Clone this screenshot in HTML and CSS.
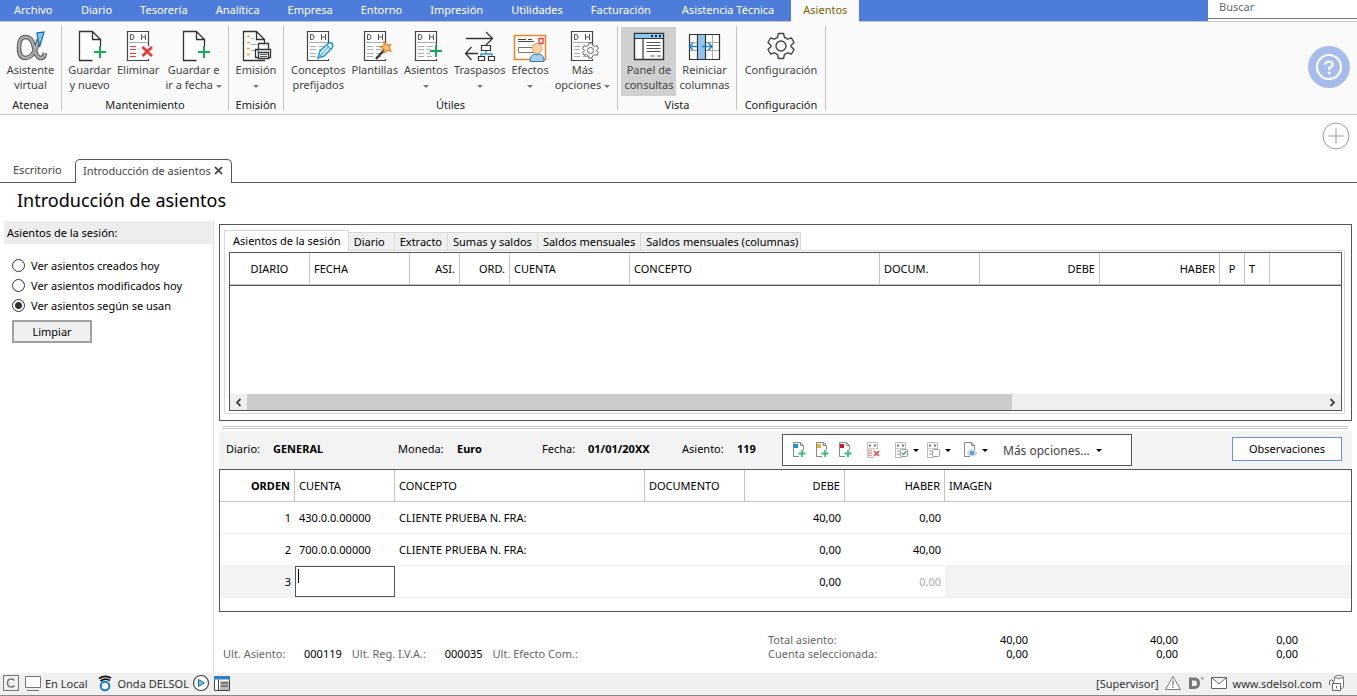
FILE: index.html
```html
<!DOCTYPE html>
<html lang="es">
<head>
<meta charset="utf-8">
<title>Introducción de asientos</title>
<link rel="stylesheet" href="styles.css">
</head>
<body>
<svg class="sprite" aria-hidden="true">
  <symbol id="page-plus" viewBox="0 0 34 34">
    <path d="M19.500 31.500H6.500V2.500H19.500L27.500 10.500V17M19.500 2.500V10.500H27.500" fill="#fff" stroke="#333" stroke-width="1.300"/>
    <path d="M27 17v12M21 23h12" stroke="#18a754" stroke-width="2"/>
  </symbol>
  <symbol id="sheet" viewBox="0 0 34 34">
    <path d="M27.500 18V2.500H6.500V31.500H27.500V30" fill="#fff" stroke="#444" stroke-width="1.200"/>
    <path d="M9.500 5.500v5h1.500q2 0 2-2.500t-2-2.500zM20.500 5v6M24.500 5v6M20.500 8h4" fill="none" stroke="#555"/>
    <path d="M8 13.500h19" stroke="#aaa"/>
  </symbol>
  <symbol id="sheet-lines" viewBox="0 0 34 34">
    <use href="#sheet"/>
    <path d="M9 17.500h6M9 20.500h6M9 24.500h6M9 27.500h6M18 17.500h6M18 20.500h6M18 24.500h5M18 27.500h5" stroke="#aaa"/>
  </symbol>
  <symbol id="gear" viewBox="0 0 28 28">
    <path d="M10.500 5.500 11.500 1.500H16.500L17.500 5.500Q19 6 20.500 7.200L24.500 6 27 10.500 24 13.500V14.500L27 17.500 24.500 22 20.500 20.800Q19 22 17.500 22.500L16.500 26.500H11.500L10.500 22.500Q9 22 7.500 20.800L3.500 22 1 17.500 4 14.500V13.500L1 10.500 3.500 6 7.500 7.200Q9 6 10.500 5.500Z" fill="#fafafa" stroke="#444" stroke-width="1.400" stroke-linejoin="round"/>
    <circle cx="14" cy="14" r="5" fill="none" stroke="#444" stroke-width="1.400"/>
  </symbol>
  <symbol id="mini-page" viewBox="0 0 18 18">
    <path d="M9 15.500H3.500V1.500H10.500L13.500 4.500V9M10.500 1.500V4.500H13.500" fill="#fff" stroke="#888"/>
  </symbol>
  <symbol id="mini-plus" viewBox="0 0 18 18">
    <path d="M12 9v7M8.500 12.500h7" stroke="#3cbd73" stroke-width="1.800"/>
  </symbol>
  <symbol id="mini-sheet" viewBox="0 0 18 18">
    <path d="M13.500 8V1.500H3.500V16.500H10" fill="#fff" stroke="#bbb"/>
    <path d="M5 3.500h2v2h-2zM10 3.500h2v2h-2z" fill="#777"/>
    <path d="M4 7.500h9" stroke="#ccc"/>
  </symbol>
  <symbol id="console" viewBox="0 0 34 34">
    <path d="M2.500 4.500H31.500V30.500H2.500Z" fill="#fff" stroke="#333" stroke-width="1.400"/>
    <path d="M3 5h28v4H3z" fill="#8ec6ef"/>
    <path d="M2.500 9.500h29M11 10v21" stroke="#333" stroke-width="1.200"/>
    <path d="M19 7h2M23 7h2M27 7h2" stroke="#222" stroke-width="2"/>
    <path d="M14.500 13.500h14M14.500 16.500h14M14.500 19.500h14M14.500 22.500h14M18.500 27h4M25 27h4" stroke="#555" stroke-width="1.200"/>
  </symbol>
</svg>

<header class="menubar">
  <nav class="menu" aria-label="Menú principal">
    <a class="menu-file" href="#">Archivo</a>
    <a href="#">Diario</a>
    <a href="#">Tesorería</a>
    <a href="#">Analítica</a>
    <a href="#">Empresa</a>
    <a href="#">Entorno</a>
    <a href="#">Impresión</a>
    <a href="#">Utilidades</a>
    <a href="#">Facturación</a>
    <a class="menu-support" href="#">Asistencia Técnica</a>
    <a class="menu-active" href="#">Asientos</a>
  </nav>
  <input class="search" type="text" placeholder="Buscar" aria-label="Buscar">
</header>

<div class="ribbon">
  <section class="group group-atenea">
    <div class="group-buttons">
      <button class="tool">
        <svg class="icon" viewBox="0 0 34 34">
          <path d="M31 24Q30 29.500 26 29Q22 28 20 18Q18 8 11.500 8Q5 8 5 18.500Q5 29 11.500 29Q18 29 22 19L25 10" fill="none" stroke="#555" stroke-width="4.600"/>
          <path d="M31 24Q30 29.500 26 29Q22 28 20 18Q18 8 11.500 8Q5 8 5 18.500Q5 29 11.500 29Q18 29 22 19L25 10" fill="none" stroke="#aaa" stroke-width="2.600"/>
          <path d="M23 4 30 3 25.500 18Z" fill="#8ec6ef" stroke="#1874ad" stroke-width="1.300"/>
        </svg>
        <span>Asistente<br>virtual</span>
      </button>
    </div>
    <h2>Atenea</h2>
  </section>
  <section class="group group-mantenimiento">
    <div class="group-buttons">
      <button class="tool"><svg class="icon"><use href="#page-plus"/></svg><span>Guardar<br>y nuevo</span></button>
      <button class="tool">
        <svg class="icon" viewBox="0 0 34 34">
          <use href="#sheet"/>
          <path d="M9 17.500h6M9 20.500h6M9 24.500h6M9 27.500h6" stroke="#ee3b3b" stroke-width="1.200"/>
          <path d="M20.500 17h11v11h-11z" fill="#fafafa"/>
          <path d="M21.500 18 31 27M31 18 21.500 27" stroke="#ea3535" stroke-width="2.600"/>
        </svg>
        <span>Eliminar</span>
      </button>
      <button class="tool"><svg class="icon"><use href="#page-plus"/></svg><span>Guardar e<br>ir a fecha <i class="caret"></i></span></button>
    </div>
    <h2>Mantenimiento</h2>
  </section>
  <section class="group group-emision">
    <div class="group-buttons">
      <button class="tool">
        <svg class="icon" viewBox="0 0 34 34">
          <path d="M26 31.500H4.500V2.500H17.500L25.500 10.500V14M17.500 2.500V10.500H25.500" fill="#fff" stroke="#333" stroke-width="1.300"/>
          <path d="M8 7.500h3M8 13.500h3M8 19.500h3M8 25.500h3" stroke="#f2a01c" stroke-width="1.600"/>
          <path d="M12 9.500h3M12 15.500h6M12 21.500h4" stroke="#aaa"/>
          <path d="M19.500 20V14.500H29.500V20M19.500 28.500H16.500V20.500H31.500V28.500H29" fill="#fff" stroke="#333" stroke-width="1.300"/>
          <path d="M19.500 23.500H29.500V29.500H19.500Z" fill="#fff" stroke="#333" stroke-width="1.300"/>
          <path d="M21 25.500h7M21 27.500h7" stroke="#555"/>
          <path d="M18 22h2" stroke="#2c8fd0" stroke-width="1.500"/>
        </svg>
        <span>Emisión<br><i class="caret"></i></span>
      </button>
    </div>
    <h2>Emisión</h2>
  </section>
  <section class="group group-utiles">
    <div class="group-buttons">
      <button class="tool">
        <svg class="icon" viewBox="0 0 34 34">
          <use href="#sheet-lines"/>
          <path d="M17 29 19 22 27 14.500Q30 13 31.500 15Q32.500 17 31 19L23 27Z" fill="#dff2fc" stroke="#2496cf" stroke-width="1.500"/>
          <path d="M19 27 28 17M26 16 29 20" stroke="#2496cf"/>
        </svg>
        <span>Conceptos<br>prefijados</span>
      </button>
      <button class="tool">
        <svg class="icon" viewBox="0 0 34 34">
          <use href="#sheet-lines"/>
          <path d="M18 30 27 20" stroke="#333" stroke-width="2.200"/>
          <path d="M26 13 28.500 16 32.500 15.500 31 19 33 22 29 21.500 26 24 26 20 22.500 18 26 17Z" fill="#ffc47c" stroke="#ef7d22" stroke-width="1.200"/>
        </svg>
        <span>Plantillas</span>
      </button>
      <button class="tool">
        <svg class="icon" viewBox="0 0 34 34">
          <use href="#sheet-lines"/>
          <path d="M21 20h8v6h-8z" fill="#fafafa"/>
          <path d="M27 16v12M21 22h12" stroke="#18a754" stroke-width="2"/>
        </svg>
        <span>Asientos<br><i class="caret"></i></span>
      </button>
      <button class="tool">
        <svg class="icon" viewBox="0 0 34 34">
          <path d="M3 9.500H29M23 3 29.500 9.500 23 16M15 24.500H3M8.500 18 2.500 24.500 8.500 31" fill="none" stroke="#333" stroke-width="1.300"/>
          <path d="M23 22v3M18 28V25H29V28" fill="none" stroke="#2c95d6" stroke-width="1.300"/>
          <path d="M18.500 16.500h9v5h-9zM15.500 27.500h6v4h-6zM25.500 27.500h6v4h-6z" fill="#fff" stroke="#333" stroke-width="1.200"/>
        </svg>
        <span>Traspasos<br><i class="caret"></i></span>
      </button>
      <button class="tool">
        <svg class="icon" viewBox="0 0 34 34">
          <path d="M1.500 6.500H32.500V30.500H1.500Z" fill="#fff" stroke="#e98327" stroke-width="1.500"/>
          <path d="M5 10.500h8M5 12.500h16M15 10.500h4" stroke="#444"/>
          <path d="M26 9.500h4v5h-4z" fill="none" stroke="#e33" stroke-width="1.300"/>
          <path d="M5.500 18.500h16v5h-16z" fill="none" stroke="#777"/>
          <circle cx="24" cy="19.500" r="5" fill="#fbd0a4" stroke="#e59a5c"/>
          <path d="M17 32.500Q17 26 21.500 25Q24 27 26.500 25Q31 26 31 32.500Z" fill="#a7cfee" stroke="#2c79b6"/>
        </svg>
        <span>Efectos<br><i class="caret"></i></span>
      </button>
      <button class="tool tool-more">
        <svg class="icon" viewBox="0 0 34 34">
          <use href="#sheet-lines"/>
          <use href="#gear" x="17" y="13" width="17" height="17"/>
        </svg>
        <span>Más<br>opciones <i class="caret"></i></span>
      </button>
    </div>
    <h2>Útiles</h2>
  </section>
  <section class="group group-vista">
    <div class="group-buttons">
      <button class="tool tool-on" aria-pressed="true"><svg class="icon"><use href="#console"/></svg><span>Panel de<br>consultas</span></button>
      <button class="tool">
        <svg class="icon" viewBox="0 0 34 34">
          <path d="M1.500 5.500h30v25h-30z" fill="#fff"/>
          <path d="M1 13.500h30M1 21.500h30M24.500 5v25" stroke="#aaa"/>
          <path d="M1.500 5.500h30v25h-30z" fill="none" stroke="#333" stroke-width="1.200"/>
          <path d="M9.500 5.500h8v25h-8z" fill="#8ec6ef" stroke="#333" stroke-width="1.200"/>
          <path d="M9 17.500H2M5 14 1.500 17.500 5 21M14 17.500H24M20 13.500 24 17.500 20 21.500" fill="none" stroke="#1d86c7" stroke-width="1.500"/>
        </svg>
        <span>Reiniciar<br>columnas</span>
      </button>
    </div>
    <h2>Vista</h2>
  </section>
  <section class="group group-config">
    <div class="group-buttons">
      <button class="tool"><svg class="icon" viewBox="0 0 34 34"><use href="#gear" x="3" y="3" width="28" height="28"/></svg><span>Configuración</span></button>
    </div>
    <h2>Configuración</h2>
  </section>
  <button class="help" aria-label="Ayuda">
    <svg viewBox="0 0 42 42">
      <circle cx="21" cy="21" r="21" fill="#a6bdec"/>
      <circle cx="21" cy="21" r="12" fill="none" stroke="#fff" stroke-width="2.200"/>
      <path d="M17.500 18.500Q17.500 15.500 21 15.500T24.700 18.500Q24.700 20.500 21.500 21.500V24" fill="none" stroke="#fff" stroke-width="2.200"/>
      <circle cx="21.300" cy="27" r="1.400" fill="#fff"/>
    </svg>
  </button>
</div>

<div class="quick">
  <button class="add" aria-label="Añadir">
    <svg viewBox="0 0 28 28"><circle cx="14" cy="14" r="13" fill="#fff" stroke="#999"/><path d="M14 6.500v15M6.500 14h15" stroke="#999"/></svg>
  </button>
</div>

<nav class="doc-tabs" aria-label="Ventanas abiertas">
  <a href="#">Escritorio</a>
  <div class="doc-active">
    <a href="#">Introducción de asientos</a>
    <button aria-label="Cerrar"><svg viewBox="0 0 9 9"><path d="M1 1 8 8M8 1 1 8" stroke="#333" stroke-width="1.600"/></svg></button>
  </div>
  <span class="doc-rest"></span>
</nav>

<h1>Introducción de asientos</h1>

<div class="workspace">
  <aside class="sidebar">
    <h3>Asientos de la sesión:</h3>
    <label><input type="radio" name="ver">Ver asientos creados hoy</label>
    <label><input type="radio" name="ver">Ver asientos modificados hoy</label>
    <label><input type="radio" name="ver" checked>Ver asientos según se usan</label>
    <button class="clear">Limpiar</button>
  </aside>

  <main class="content">
    <section class="query">
      <div class="query-tabs">
        <button class="query-tab query-tab-on">Asientos de la sesión</button>
        <button class="query-tab query-tab-wide">Diario</button>
        <button class="query-tab">Extracto</button>
        <button class="query-tab">Sumas y saldos</button>
        <button class="query-tab">Saldos mensuales</button>
        <button class="query-tab">Saldos mensuales (columnas)</button>
      </div>
      <div class="query-page">
        <div class="query-grid">
          <table class="grid grid-session">
            <colgroup><col class="w80"><col class="w100"><col class="w50"><col class="w50"><col class="w120"><col class="w250"><col class="w100"><col class="w120"><col class="w120"><col class="w25"><col class="w25"><col></colgroup>
            <thead>
              <tr><th class="mid">DIARIO</th><th>FECHA</th><th class="num">ASI.</th><th class="num">ORD.</th><th>CUENTA</th><th>CONCEPTO</th><th>DOCUM.</th><th class="num">DEBE</th><th class="num">HABER</th><th class="mid">P</th><th>T</th><th></th></tr>
            </thead>
          </table>
          <div class="scroll">
            <button aria-label="Desplazar a la izquierda"><svg viewBox="0 0 9 9"><path d="M6.500 1 3 4.500 6.500 8" fill="none" stroke="#444" stroke-width="1.800"/></svg></button>
            <div class="scroll-track"><div class="scroll-thumb"></div></div>
            <button aria-label="Desplazar a la derecha"><svg viewBox="0 0 9 9"><path d="M2.500 1 6 4.500 2.500 8" fill="none" stroke="#444" stroke-width="1.800"/></svg></button>
          </div>
        </div>
      </div>
    </section>

    <div class="splitter"></div>

    <div class="entry-bar">
      <div class="entry-data">
        <span>Diario:</span><b>GENERAL</b>
        <span>Moneda:</span><b>Euro</b>
        <span>Fecha:</span><b>01/01/20XX</b>
        <span>Asiento:</span><b>119</b>
      </div>
      <div class="entry-tools">
        <button aria-label="Añadir línea"><svg class="mini" viewBox="0 0 18 18"><use href="#mini-page"/><path d="M4 3h4v4H4z" fill="#0d94dd"/><use href="#mini-plus"/></svg></button>
        <button aria-label="Insertar línea"><svg class="mini" viewBox="0 0 18 18"><use href="#mini-page"/><path d="M4 3h4v4H4z" fill="#f2ac2b"/><use href="#mini-plus"/></svg></button>
        <button aria-label="Duplicar línea"><svg class="mini" viewBox="0 0 18 18"><use href="#mini-page"/><path d="M4 3h4v4H4z" fill="#db1030"/><use href="#mini-plus"/></svg></button>
        <button class="spaced" aria-label="Eliminar línea"><svg class="mini" viewBox="0 0 18 18"><use href="#mini-sheet"/><path d="M4 9.500h4M4 12h4M4 14.500h4" stroke="#f39a9a" stroke-width="1.500"/><path d="M9 8h7v8H9z" fill="#fff"/><path d="M10 10 15 15M15 10 10 15" stroke="#ec4a4a" stroke-width="1.700"/></svg></button>
        <button class="spaced" aria-label="Validar"><svg class="mini" viewBox="0 0 18 18"><use href="#mini-sheet"/><path d="M5 10h3M5 13h3" stroke="#bbb" stroke-width="1.500"/><rect x="8.500" y="8.500" width="7" height="7" rx="1" fill="#fff" stroke="#999"/><path d="M10 12 11.500 13.500 14.500 10" fill="none" stroke="#2fb562" stroke-width="1.300"/></svg><i class="caret caret-dark"></i></button>
        <button aria-label="Desmarcar"><svg class="mini" viewBox="0 0 18 18"><use href="#mini-sheet"/><path d="M5 10h3M5 13h3" stroke="#bbb" stroke-width="1.500"/><rect x="8.500" y="8.500" width="7" height="7" rx="1" fill="#fff" stroke="#999"/></svg><i class="caret caret-dark"></i></button>
        <button class="spaced" aria-label="Ver documento"><svg class="mini" viewBox="0 0 18 18"><use href="#mini-page"/><ellipse cx="11" cy="12" rx="5" ry="3.500" fill="#c6d7e4"/><circle cx="11" cy="12" r="2.300" fill="#5e9dcc"/></svg><i class="caret caret-dark"></i></button>
        <button class="more">Más opciones...<i class="caret caret-dark"></i></button>
      </div>
      <button class="notes">Observaciones</button>
    </div>

    <div class="entry-panel">
      <table class="grid grid-entry">
        <colgroup><col class="w75"><col class="w100"><col class="w250"><col class="w100"><col class="w100"><col class="w100"><col></colgroup>
        <thead>
          <tr><th class="num strong">ORDEN</th><th>CUENTA</th><th>CONCEPTO</th><th>DOCUMENTO</th><th class="num">DEBE</th><th class="num">HABER</th><th>IMAGEN</th></tr>
        </thead>
        <tbody>
          <tr><td class="num">1</td><td>430.0.0.00000</td><td>CLIENTE PRUEBA N. FRA:</td><td></td><td class="num">40,00</td><td class="num">0,00</td><td></td></tr>
          <tr><td class="num">2</td><td>700.0.0.00000</td><td>CLIENTE PRUEBA N. FRA:</td><td></td><td class="num">0,00</td><td class="num">40,00</td><td></td></tr>
          <tr><td class="num shade">3</td><td class="edit"><input type="text" aria-label="Cuenta"></td><td></td><td></td><td class="num">0,00</td><td class="num faint">0,00</td><td class="shade"></td></tr>
        </tbody>
      </table>
    </div>

    <div class="totals">
      <div class="last">
        <span class="last-entry">Ult. Asiento:</span><output>000119</output>
        <span>Ult. Reg. I.V.A.:</span><output>000035</output>
        <span>Ult. Efecto Com.:</span>
      </div>
      <div class="sums">
        <span>Total asiento:</span><output>40,00</output><output>40,00</output><output>0,00</output>
        <span>Cuenta seleccionada:</span><output>0,00</output><output>0,00</output><output>0,00</output>
      </div>
    </div>
  </main>
</div>

<footer class="status">
  <div class="status-side">
    <svg class="status-icon" viewBox="0 0 18 18"><rect x="1.500" y="1.500" width="15" height="15" fill="none" stroke="#777"/><path d="M12.500 6.500Q11.500 5 9.300 5Q5.500 5 5.500 9T9.300 13Q11.500 13 12.500 11.500" fill="none" stroke="#777" stroke-width="1.500"/></svg>
    <svg class="status-icon status-screen" viewBox="0 0 18 18"><path d="M1.500 2.500h15v11h-15z" fill="#fff" stroke="#777"/><path d="M3 16.500h12" stroke="#777"/></svg>
    <span class="local">En Local</span>
    <svg class="status-icon" viewBox="0 0 18 18"><circle cx="9" cy="12" r="4.300" fill="#fff" stroke="#0c7bd0" stroke-width="2"/><path d="M3 4.500Q9 .500 15 4M4.500 7Q9 3.500 14 6.500" fill="none" stroke="#111" stroke-width="1.800"/></svg>
    <span>Onda DELSOL</span>
    <svg class="status-icon" viewBox="0 0 18 18"><circle cx="9" cy="9" r="7.500" fill="#fff" stroke="#444" stroke-width="1.200"/><path d="M6.500 5.500 12.500 9 6.500 12.500Z" fill="#7db9e8" stroke="#1b6fae"/></svg>
    <svg class="status-icon" viewBox="0 0 18 18"><path d="M1.500 2.500h15v14h-15z" fill="#fff" stroke="#444"/><path d="M1 2h16v3.500H1z" fill="#2f80c3"/><path d="M5.500 5.500v11" stroke="#444"/><path d="M7 7h9v9H7z" fill="#bbb"/><path d="M8 9h7M8 12h7" stroke="#666" stroke-width="1.500"/></svg>
  </div>
  <div class="status-side status-end">
    <span>[Supervisor]</span>
    <svg class="status-icon" viewBox="0 0 18 18"><path d="M9 2.500 16.500 15.500H1.500Z" fill="#fff" stroke="#777"/><path d="M9 6.500v5M9 12.500v1.500" stroke="#777" stroke-width="1.300"/></svg>
    <svg class="status-icon" viewBox="0 0 18 18"><path d="M3.500 5H7.500Q11.500 5 11.500 9.300T7.500 13.500H3.500Z" fill="none" stroke="#777" stroke-width="3"/><path d="M14 3h2.500v2.500H14z" fill="#aaa"/></svg>
    <svg class="status-icon" viewBox="0 0 18 18"><path d="M1.500 3.500h15v11h-15zM1.500 3.500 9 10 16.500 3.500" fill="#fff" stroke="#666"/></svg>
    <a href="#">www.sdelsol.com</a>
    <svg class="status-icon" viewBox="0 0 18 18"><path d="M7.500 7V3Q7.500 1.500 12 1.500T16.500 3V13Q16 14.500 14 14.500M7.500 3.500Q12 5.500 16.500 3.500" fill="#fff" stroke="#777"/><path d="M5.500 9.500h8v7h-8z" fill="#fff" stroke="#666"/><path d="M2.500 11V8Q2.500 6 4.500 6T6.500 8V9.500M9.500 12v2.500" fill="none" stroke="#666"/></svg>
  </div>
</footer>
</body>
</html>
```

FILE: styles.css
```css
* { box-sizing: border-box; }

body {
  margin: 0;
  min-height: 100vh;
  display: flex;
  flex-direction: column;
  background: #fff;
  color: #000;
  font: 11px/15px "Noto Sans", "Open Sans", sans-serif;
}

button, input { font: inherit; color: inherit; }
button { padding: 0; border: 0; background: none; }
a { color: inherit; text-decoration: none; }
h1, h2, h3 { margin: 0; font-weight: 400; }
svg { display: block; }
.sprite { display: none; }

/* Menu */
.menubar { display: flex; height: 22px; background: #4d7cdb; border-bottom: 1px solid #c4c4c4; }
.menu { display: flex; flex: 1; color: #fff; }
.menu a { padding: 2px 14px 0; white-space: nowrap; }
.menu .menu-file { width: 67px; }
.menu .menu-support { padding: 2px 17px 0; }
.menu .menu-active { height: 22px; padding: 2px 12px 0; background: #fafafa; color: #7f6000; }
.search { width: 149px; height: 19px; padding: 0 11px 5px; border: 0; border-bottom: 1px solid #777; box-shadow: 0 2px #fff; outline: 0; }
.search::placeholder { color: #666; opacity: 1; }

/* Ribbon */
.ribbon { display: flex; height: 93px; padding: 4px 0; background: #fafafa; border-bottom: 1px solid #c4c4c4; color: #444; }
.group { display: flex; flex-direction: column; justify-content: space-between; border-right: 1px solid #c4c4c4; padding-top: 1px; }
.group h2 { font-size: 11px; line-height: 11px; text-align: center; color: #222; }
.group-atenea { width: 62px; }
.group-mantenimiento { width: 167px; }
.group-emision { width: 55px; }
.group-utiles { width: 334px; }
.group-vista { width: 119px; }
.group-config { width: 89px; }
.group-buttons { display: flex; justify-content: center; }
.tool { display: flex; flex-direction: column; align-items: center; height: 69px; padding: 2px 3px 0; white-space: nowrap; }
.tool-on { background: #d0d0d0; }
.icon { width: 34px; height: 34px; margin-bottom: -1px; flex: none; }
.caret { display: inline-block; vertical-align: middle; border: 3px solid transparent; border-top-color: #777; border-bottom: 0; }
.caret-dark { border-top-color: #000; }
.help { width: 42px; height: 42px; margin: 20px 7px 0 auto; }

/* Open windows */
.quick { display: flex; justify-content: flex-end; height: 44px; padding: 7px 7px 0; }
.add { width: 28px; height: 28px; }
.doc-tabs { display: flex; height: 24px; color: #444; }
.doc-tabs > a { width: 75px; padding: 3px 13px 0; border-bottom: 1px solid #555; }
.doc-active { display: flex; align-items: center; gap: 3px; padding: 0 8px 3px 7px; border: 1px solid #555; border-bottom: 0; border-radius: 5px 5px 0 0; white-space: nowrap; }
.doc-active svg { width: 9px; height: 9px; }
.doc-rest { flex: 1; border-bottom: 1px solid #555; }
h1 { height: 38px; padding: 4px 17px 0; font-size: 18px; line-height: 26px; }

/* Sidebar */
.workspace { display: flex; flex: 1; }
.sidebar { display: flex; flex-direction: column; align-items: flex-start; width: 214px; padding: 0 1px 0 4px; border-right: 1px solid #d8d8d8; }
.sidebar h3 { align-self: stretch; height: 23px; margin-bottom: 11px; padding: 4px 3px; background: #ededed; font-size: 11px; line-height: 15px; }
.sidebar label { display: flex; align-items: center; gap: 6px; height: 20px; margin-left: 8px; }
.sidebar input { appearance: none; width: 13px; height: 13px; margin: 0; border: 1px solid #333; border-radius: 50%; background: #fff; }
.sidebar input:checked { background: radial-gradient(circle, #333 3px, #fff 4px); }
.clear { width: 80px; height: 23px; margin: 5px 8px; border: 2px solid #a0a0a0; background: #efefef; }

/* Query panel */
.content { display: flex; flex: 1; flex-direction: column; min-width: 0; padding: 3px 5px 0; }
.query { display: flex; flex: 1; flex-direction: column; padding: 5px 6px 6px 4px; border: 1px solid #555; }
.query-tabs { display: flex; align-items: flex-end; height: 20px; }
.query-tab { height: 18px; padding: 0 5px; border: 1px solid #d9d9d9; border-width: 1px 1px 0 0; background: #efefef; white-space: nowrap; }
.query-tab-wide { padding-right: 9px; }
.query-tab:last-child { padding-right: 2px; }
.query-tab-on { position: relative; height: 21px; margin-bottom: -1px; padding: 0 7px 2px 8px; border-left-width: 1px; background: #fff; }
.query-page { display: flex; flex: 1; padding: 1px 2px 2px 4px; border: 1px solid #d9d9d9; }
.query-grid { display: flex; flex: 1; flex-direction: column; justify-content: space-between; border: 1px solid #555; }
.scroll { display: flex; height: 16px; background: #efefef; }
.scroll button { display: grid; place-items: center; width: 17px; }
.scroll svg { width: 9px; height: 9px; }
.scroll-track { flex: 1; }
.scroll-thumb { width: 71%; height: 100%; background: #ccc; }

/* Tables */
.grid { width: 100%; table-layout: fixed; border-collapse: separate; border-spacing: 0; }
.grid th, .grid td { height: 32px; padding: 0 4px; text-align: left; font-weight: 400; white-space: nowrap; }
.grid th { border-right: 1px solid #c4c4c4; border-bottom: 1px solid #c4c4c4; }
.grid td { border-bottom: 1px solid #eee; }
.grid th:last-child { border-right: 0; }
.grid-session { border-bottom: 1px solid #555; }
.grid .num { text-align: right; }
.grid .mid { text-align: center; }
.grid .strong { font-weight: 700; }
.grid .shade { background: #f3f3f3; }
.grid .faint { color: #aaa; }
.grid .edit { padding: 0; }
.edit input { display: block; width: 100%; height: 31px; padding: 1px 2px 12px; border: 1px solid #555; outline: 0; background: linear-gradient(#000, #000) 2px 2px / 1px 14px no-repeat #fff; }
.w25 { width: 25px; }
.w50 { width: 50px; }
.w75 { width: 75px; }
.w80 { width: 80px; }
.w100 { width: 100px; }
.w120 { width: 120px; }
.w250 { width: 250px; }

/* Entry */
.splitter { height: 3px; margin: 5px 4px 2px; border: 1px solid #c4c4c4; border-width: 1px 0; }
.entry-bar { display: flex; align-items: center; height: 38px; padding: 0 10px 0 7px; background: #f3f3f3; }
.entry-data { display: grid; grid-template-columns: 47px 125px 59px 85px 46px 94px 55px 45px; padding-bottom: 3px; white-space: nowrap; }
.entry-tools { display: flex; align-items: center; width: 350px; height: 32px; padding: 0 7px; border: 1px solid #555; background: #fff; }
.entry-tools button { display: flex; align-items: center; gap: 3px; padding-right: 5px; }
.entry-tools .spaced { padding-left: 5px; }
.entry-tools .more { gap: 6px; padding-left: 10px; color: #444; font-size: 12px; }
.mini { width: 18px; height: 18px; }
.notes { width: 110px; height: 24px; margin: 0 0 3px auto; border: 1px solid #6a92e0; background: #fff; }
.entry-panel { height: 143px; border: 1px solid #555; }

/* Totals */
.totals { display: flex; align-items: flex-end; justify-content: space-between; padding: 21px 54px 12px 4px; line-height: 14px; color: #666; white-space: nowrap; }
.totals output { color: #000; }
.last { display: flex; gap: 10px; }
.last span { width: 83px; }
.last .last-entry { width: 71px; }
.sums { display: grid; grid-template-columns: 160px 100px 150px 120px; }
.sums output { text-align: right; }

/* Status bar */
.status { display: flex; align-items: center; justify-content: space-between; height: 23px; padding: 0 12px 2px 2px; background: #f0f0f0; border-bottom: 1px solid #888; color: #333; white-space: nowrap; }
.status-side { display: flex; align-items: center; gap: 3px; }
.status-end { gap: 5px; }
.status-icon { width: 18px; height: 18px; flex: none; }
.status-screen { margin-left: 1px; }
.local { margin-right: 6px; }
```
